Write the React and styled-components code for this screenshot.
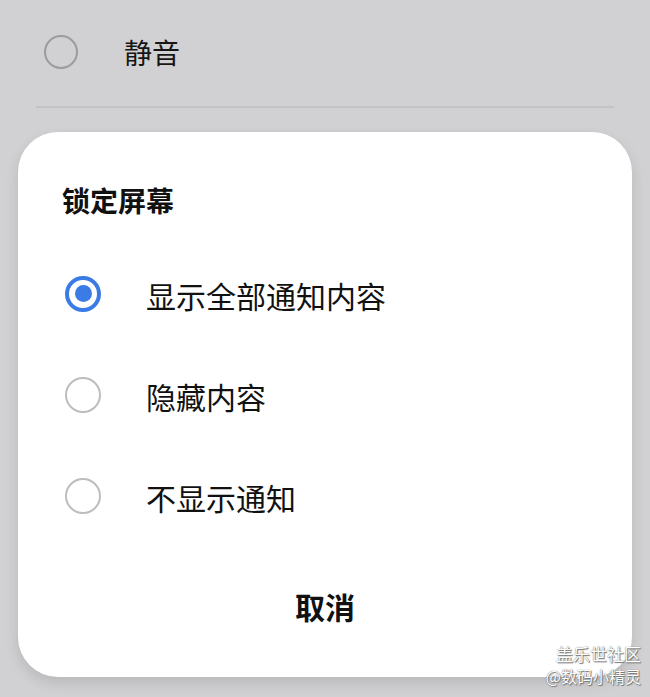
import React from "react";
import styled, { createGlobalStyle } from "styled-components";

const GlobalStyle = createGlobalStyle`
  html, body {
    margin: 0;
    padding: 0;
    background: #d1d1d3;
  }
  body {
    font-family: "Noto Sans CJK SC", "Noto Sans", sans-serif;
    color: #111111;
  }
`;

const Page = styled.div`
  position: relative;
  width: 650px;
  height: 697px;
  overflow: hidden;
  background: #d1d1d3;
`;

const TopRow = styled.div`
  display: flex;
  align-items: center;
  gap: 46px;
  height: 103px;
  padding-left: 44px;
  box-sizing: border-box;
`;

const TopLabel = styled.span`
  font-size: 28px;
  line-height: 36px;
  color: #161616;
`;

const Divider = styled.div`
  height: 2px;
  margin: 3px 36px 0;
  background: #c3c3c5;
`;

const Card = styled.div`
  margin: 24px 18px 0;
  height: 545px;
  background: #ffffff;
  border-radius: 40px;
  box-shadow: 0 6px 14px rgba(0, 0, 0, 0.12);
  display: flex;
  flex-direction: column;
  padding: 49px 0 0;
  box-sizing: border-box;
`;

const Title = styled.h2`
  margin: 0 0 24px 44px;
  font-size: 28px;
  line-height: 38px;
  font-weight: 700;
`;

const Option = styled.div`
  display: flex;
  align-items: center;
  gap: 45px;
  height: 101px;
  padding-left: 47px;
`;

const Radio = styled.span`
  position: relative;
  flex-shrink: 0;
  width: ${(p) => p.size}px;
  height: ${(p) => p.size}px;
  box-sizing: border-box;
  border-radius: 50%;
  border: ${(p) => (p.checked ? "4px solid #3b7be6" : `2.5px solid ${p.tone}`)};
  &::after {
    content: "";
    display: ${(p) => (p.checked ? "block" : "none")};
    position: absolute;
    left: 50%;
    top: 50%;
    width: 17px;
    height: 17px;
    margin: -8.5px 0 0 -8.5px;
    border-radius: 50%;
    background: #3b7be6;
  }
`;

const OptionLabel = styled.span`
  font-size: 30px;
  line-height: 40px;
  color: #111111;
  position: relative;
  top: 1px;
`;

const CancelButton = styled.div`
  margin-top: 30px;
  height: 60px;
  display: flex;
  align-items: center;
  justify-content: center;
  font-size: 30px;
  font-weight: 700;
  color: #111111;
`;

const Watermark = styled.div`
  position: absolute;
  right: 9px;
  bottom: 10px;
  display: flex;
  flex-direction: column;
  align-items: flex-end;
  color: #ffffff;
  text-shadow: 0 0 1px #555, 1px 1px 1px #777;
  line-height: 22px;
`;

const WaterLine = styled.span`
  font-size: ${(p) => p.size}px;
`;

const options = [
  { label: "显示全部通知内容", checked: true },
  { label: "隐藏内容", checked: false },
  { label: "不显示通知", checked: false },
];

export default function App() {
  return (
    <>
      <GlobalStyle />
      <Page>
        <TopRow>
          <Radio size={34} tone="#9c9c9e" />
          <TopLabel>静音</TopLabel>
        </TopRow>
        <Divider />
        <Card>
          <Title>锁定屏幕</Title>
          {options.map((o) => (
            <Option key={o.label}>
              <Radio size={36} checked={o.checked} tone="#bdbdbd" />
              <OptionLabel>{o.label}</OptionLabel>
            </Option>
          ))}
          <CancelButton>取消</CancelButton>
        </Card>
        <Watermark>
          <WaterLine size={17}>盖乐世社区</WaterLine>
          <WaterLine size={16}>@数码小精灵</WaterLine>
        </Watermark>
      </Page>
    </>
  );
}
